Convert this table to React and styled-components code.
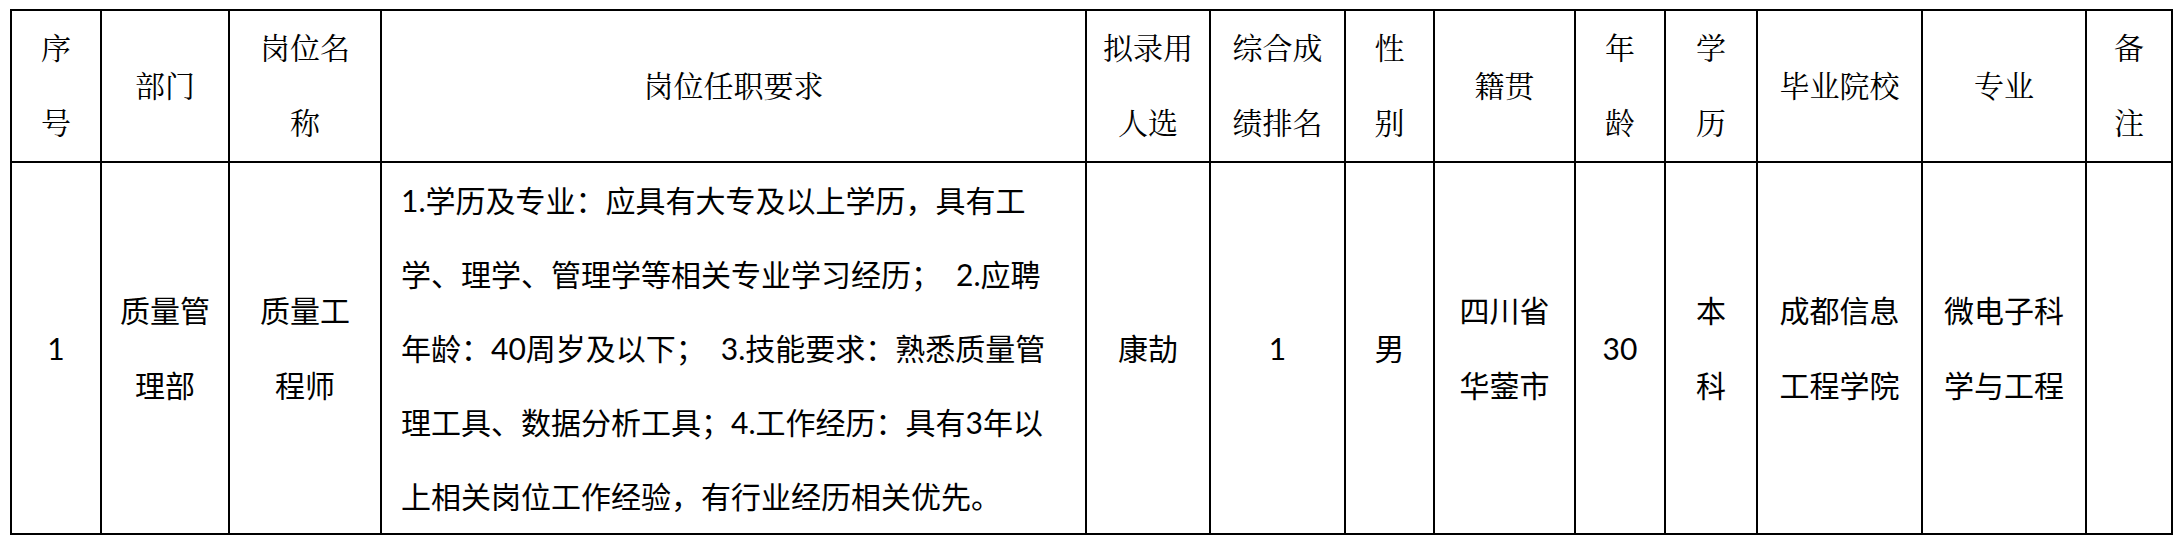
import React from "react";
import styled, { createGlobalStyle } from "styled-components";

const GlobalStyle = createGlobalStyle`
  html, body {
    margin: 0;
    padding: 0;
    background: #ffffff;
  }
`;

const Page = styled.div`
  padding: 9px 0 0 10px;
  background: #ffffff;
`;

const Table = styled.table`
  width: 2161px;
  table-layout: fixed;
  border-collapse: collapse;
  border: 2px solid #000;
`;

const HeadCell = styled.th`
  height: 150px;
  padding: 0;
  border: 2px solid #000;
  font-family: "Liberation Serif", "Noto Serif CJK SC", "Noto Sans CJK SC", serif;
  font-size: 30px;
  font-weight: normal;
  line-height: 75px;
  color: #000;
  text-align: center;
  vertical-align: middle;
  white-space: pre-line;
`;

const BodyCell = styled.td`
  height: 370px;
  padding: ${(p) => (p.$left ? "0 0 0 19px" : "0")};
  border: 2px solid #000;
  font-family: Lato, "Noto Sans CJK SC", sans-serif;
  font-size: 30px;
  line-height: ${(p) => (p.$left ? "74px" : "75px")};
  color: #000;
  text-align: ${(p) => (p.$left ? "left" : "center")};
  vertical-align: middle;
  white-space: pre;
`;

const widths = [90, 128, 152, 705, 124, 135, 89, 141, 90, 92, 165, 164, 86];

const headers = [
  "序\n号",
  "部门",
  "岗位名\n称",
  "岗位任职要求",
  "拟录用\n人选",
  "综合成\n绩排名",
  "性\n别",
  "籍贯",
  "年\n龄",
  "学\n历",
  "毕业院校",
  "专业",
  "备\n注",
];

const requirement = [
  "1.学历及专业：应具有大专及以上学历，具有工",
  "学、理学、管理学等相关专业学习经历；\u30002.应聘",
  "年龄：40周岁及以下；\u30003.技能要求：熟悉质量管",
  "理工具、数据分析工具；4.工作经历：具有3年以",
  "上相关岗位工作经验，有行业经历相关优先。",
].join("\n");

const row = [
  "1",
  "质量管\n理部",
  "质量工\n程师",
  requirement,
  "康劼",
  "1",
  "男",
  "四川省\n华蓥市",
  "30",
  "本\n科",
  "成都信息\n工程学院",
  "微电子科\n学与工程",
  "",
];

const App = () => {
  return (
    <Page>
      <GlobalStyle />
      <Table>
        <colgroup>
          {widths.map((w, i) => (
            <col key={i} style={{ width: w }} />
          ))}
        </colgroup>
        <thead>
          <tr>
            {headers.map((h, i) => (
              <HeadCell key={i}>{h}</HeadCell>
            ))}
          </tr>
        </thead>
        <tbody>
          <tr>
            {row.map((c, i) => (
              <BodyCell key={i} $left={i === 3}>
                {c}
              </BodyCell>
            ))}
          </tr>
        </tbody>
      </Table>
    </Page>
  );
};

export default App;
